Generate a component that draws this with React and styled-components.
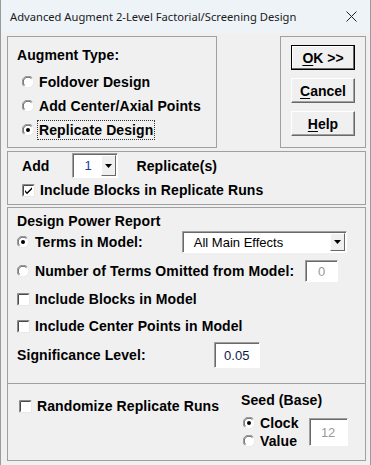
import React from 'react';
import styled, { createGlobalStyle } from 'styled-components';

const GlobalStyle = createGlobalStyle`
    html, body {
        margin:0;
        padding:0;
        background:#fff;
    }
`;

const Window = styled.div`
    width:371px;
    height:465px;
    box-sizing:border-box;
    background:#f0f0f0;
    display:flex;
    flex-direction:column;
    overflow:hidden;
    font-family:"Liberation Sans", Arial, sans-serif;
    border-left:1px solid #9a9a9a;
    border-right:1px solid #9a9a9a;
`;

const TitleBar = styled.div`
    height:33px;
    flex:none;
    background:#eef3f8;
    display:flex;
    align-items:center;
    justify-content:space-between;
    padding:0 9px 0 9px;
    font-family:"Noto Sans", "Open Sans", sans-serif;
    font-size:11.2px;
    color:#1a1a1a;
`;

const Body = styled.div`
    flex:1;
    display:flex;
    flex-direction:column;
    padding:3px 4px 0 6px;
`;

const TopRow = styled.div`
    display:flex;
    justify-content:space-between;
    height:112px;
`;

const Group = styled.div`
    box-sizing:border-box;
    border:1px solid #a0a0a0;
    width:${props => props.width ? props.width + 'px' : 'auto'};
    height:${props => props.height}px;
    margin-top:${props => props.mt || 0}px;
    padding:${props => props.pad || '0'};
    display:flex;
    flex-direction:${props => props.row ? 'row' : 'column'};
`;

const ButtonCol = styled(Group)`
    align-items:center;
    gap:8px;
    padding-top:8px;
`;

const Button = styled.div`
    box-sizing:border-box;
    width:64px;
    height:25px;
    display:flex;
    align-items:center;
    justify-content:center;
    font-size:14px;
    font-weight:bold;
    background:#f0f0f0;
    border:1px solid;
    border-color:${props => props.focus ? '#000' : '#fff #696969 #696969 #fff'};
    box-shadow:${props => props.focus ? 'inset -1px -1px #696969, inset 1px 1px #fff' : 'inset -1px -1px #a0a0a0'};

    u { text-decoration:underline; text-underline-offset:2px; }
`;

const Line = styled.div`
    display:flex;
    align-items:center;
    height:${props => props.h || 20}px;
    margin-top:${props => props.mt || 0}px;
    padding-left:${props => props.pl || 0}px;
    flex:none;
`;

const Label = styled.span`
    font-size:14px;
    font-weight:bold;
    letter-spacing:0.1px;
    color:#000;
    white-space:nowrap;
    margin-left:${props => props.ml || 0}px;
    ${props => props.focus ? 'outline:1px dotted #333; outline-offset:1px;' : ''}
`;

const Option = styled.div`
    display:flex;
    align-items:center;
    gap:${props => props.gap || 5}px;
`;

const Field = styled.div`
    box-sizing:border-box;
    width:${props => props.w}px;
    height:${props => props.h}px;
    background:#fff;
    border:1px solid;
    border-color:#a0a0a0 #fff #fff #a0a0a0;
    box-shadow:inset 1px 1px #696969;
    display:flex;
    align-items:center;
    justify-content:${props => props.left ? 'flex-start' : 'center'};
    padding-left:${props => props.left ? props.left : 0}px;
    margin-left:${props => props.ml || 0}px;
    font-size:13px;
    color:${props => props.color || '#000'};
    position:relative;
`;

const DropBtn = styled.div`
    position:absolute;
    top:1px;
    right:1px;
    bottom:1px;
    width:15px;
    box-sizing:border-box;
    background:#f0f0f0;
    border:1px solid;
    border-color:#fff #696969 #696969 #fff;
    display:flex;
    align-items:center;
    justify-content:center;
`;

const Column = styled.div`
    display:flex;
    flex-direction:column;
    width:${props => props.w ? props.w + 'px' : 'auto'};
    padding-top:${props => props.pt || 0}px;
    padding-left:${props => props.pl || 0}px;
`;

const Radio = ({ checked }) => (
    <svg width="12" height="12" viewBox="0 0 12 12" style={{ flex: 'none' }}>
        <circle cx="6" cy="6" r="5.5" fill="#fff" />
        <path d="M1.8 10.2 A5.5 5.5 0 0 1 10.2 1.8" fill="none" stroke="#8a8a8a" strokeWidth="1" />
        <path d="M2.6 9.4 A4.5 4.5 0 0 1 9.4 2.6" fill="none" stroke="#5a5a5a" strokeWidth="1" />
        <path d="M10.2 1.8 A5.5 5.5 0 0 1 1.8 10.2" fill="none" stroke="#e8e8e8" strokeWidth="1" />
        {checked && <circle cx="6" cy="6" r="2" fill="#000" />}
    </svg>
);

const Check = ({ checked }) => (
    <svg width="13" height="13" viewBox="0 0 13 13" style={{ flex: 'none' }}>
        <rect x="0" y="0" width="13" height="13" fill="#fff" />
        <path d="M0.5 12.5 V0.5 H12.5" fill="none" stroke="#8a8a8a" />
        <path d="M1.5 11.5 V1.5 H11.5" fill="none" stroke="#4a4a4a" />
        <path d="M12.5 0.5 V12.5 H0.5" fill="none" stroke="#e8e8e8" />
        {checked && <path d="M3 6 L5 8.2 L10 3.2 L10 5.2 L5 10.2 L3 8 Z" fill="#000" />}
    </svg>
);

const Arrow = () => (
    <svg width="7" height="4" viewBox="0 0 7 4">
        <path d="M0 0 H7 L3.5 4 Z" fill="#000" />
    </svg>
);

const App = () => {
    return (
        <Window>
            <GlobalStyle />
            <TitleBar>
                <span>Advanced Augment 2-Level Factorial/Screening Design</span>
                <svg width="11" height="11" viewBox="0 0 11 11" style={{ marginRight: 4 }}>
                    <path d="M0.5 0.5 L10.5 10.5 M10.5 0.5 L0.5 10.5" stroke="#222" strokeWidth="1" />
                </svg>
            </TitleBar>
            <Body>
                <TopRow>
                    <Group width={210} height={112} pad="8px 0 0 9px">
                        <Line h={20}><Label>Augment Type:</Label></Line>
                        <Line h={24} mt={5} pl={5}>
                            <Option><Radio /><Label>Foldover Design</Label></Option>
                        </Line>
                        <Line h={24} pl={5}>
                            <Option><Radio /><Label>Add Center/Axial Points</Label></Option>
                        </Line>
                        <Line h={24} pl={5}>
                            <Option><Radio checked /><Label focus>Replicate Design</Label></Option>
                        </Line>
                    </Group>
                    <ButtonCol as="div" width={86} height={112}>
                        <Button focus><span><u>O</u>K &gt;&gt;</span></Button>
                        <Button><span><u>C</u>ancel</span></Button>
                        <Button><span><u>H</u>elp</span></Button>
                    </ButtonCol>
                </TopRow>

                <Group height={54} mt={3} pad="1px 0 0 14px">
                    <Line h={25}>
                        <Label>Add</Label>
                        <Field w={46} h={25} left={12} ml={22} color="#1b3a9a">
                            1
                            <DropBtn><Arrow /></DropBtn>
                        </Field>
                        <Label ml={19}>Replicate(s)</Label>
                    </Line>
                    <Line h={20} mt={2}>
                        <Option><Check checked /><Label>Include Blocks in Replicate Runs</Label></Option>
                    </Line>
                </Group>

                <Group height={177} mt={2} pad="4px 0 0 9px">
                    <Line h={18}><Label>Design Power Report</Label></Line>
                    <Line h={22} mt={1}>
                        <Option gap={6}><Radio checked /><Label>Terms in Model:</Label></Option>
                        <Field w={165} h={22} left={11} ml={39}>
                            All Main Effects
                            <DropBtn><Arrow /></DropBtn>
                        </Field>
                    </Line>
                    <Line h={22} mt={7}>
                        <Option gap={6}><Radio /><Label>Number of Terms Omitted from Model:</Label></Option>
                        <Field w={33} h={22} ml={11} color="#9a9a9a">0</Field>
                    </Line>
                    <Line h={20} mt={7}>
                        <Option><Check /><Label>Include Blocks in Model</Label></Option>
                    </Line>
                    <Line h={20} mt={7}>
                        <Option><Check /><Label>Include Center Points in Model</Label></Option>
                    </Line>
                    <Line h={26} mt={6}>
                        <Label>Significance Level:</Label>
                        <Field w={46} h={26} ml={68} color="#0a1a4a">0.05</Field>
                    </Line>
                </Group>

                <Group height={78} mt={-1} row pad="0 0 0 11px">
                    <Column w={222} pt={12}>
                        <Line h={20}>
                            <Option><Check /><Label>Randomize Replicate Runs</Label></Option>
                        </Line>
                    </Column>
                    <Column pt={7}>
                        <Line h={17}><Label>Seed (Base)</Label></Line>
                        <Line h={40} mt={4}>
                            <Column pl={2}>
                                <Line h={18}>
                                    <Option><Radio checked /><Label>Clock</Label></Option>
                                </Line>
                                <Line h={18}>
                                    <Option><Radio /><Label>Value</Label></Option>
                                </Line>
                            </Column>
                            <Field w={39} h={28} ml={10} color="#9a9a9a">12</Field>
                        </Line>
                    </Column>
                </Group>
            </Body>
        </Window>
    );
};

export default App;
